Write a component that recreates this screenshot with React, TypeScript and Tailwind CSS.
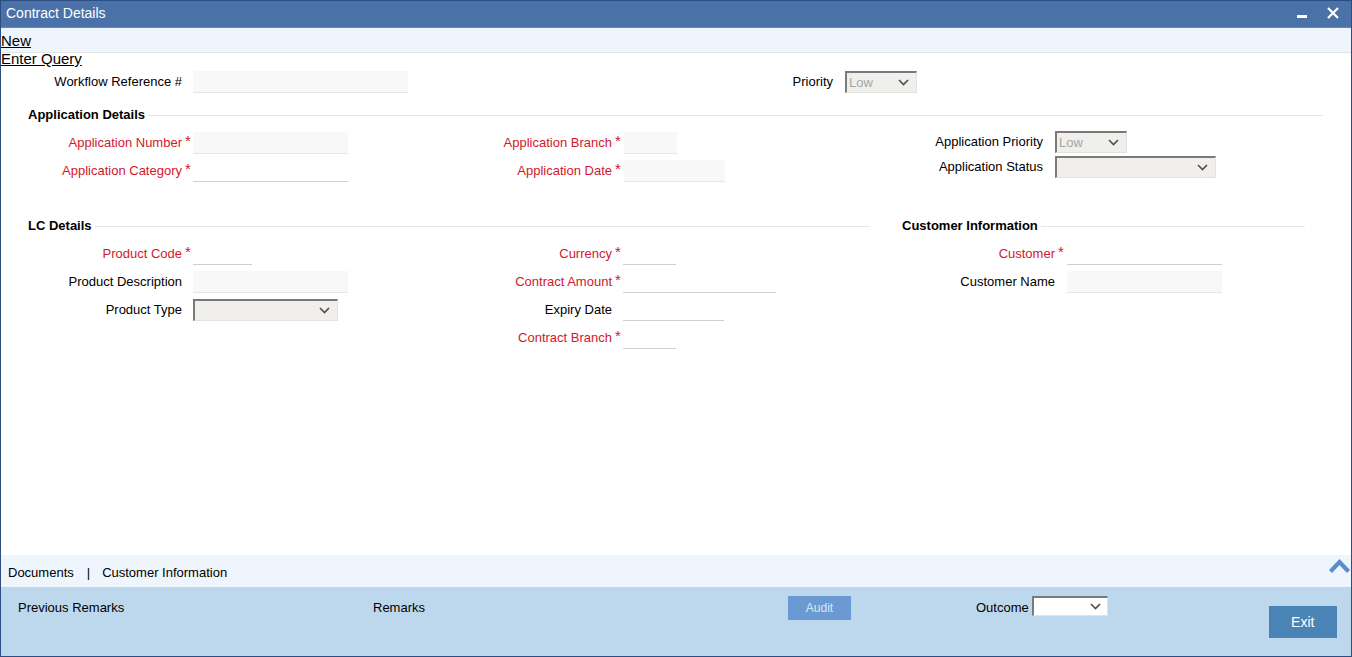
import type { ReactNode } from "react";

const RED = "text-[#d2172b]";

interface FieldProps {
  label: string;
  req?: boolean;
  lw: string;
  slot?: string;
  children: ReactNode;
}

const Field = ({ label, req, lw, slot = "w-[11px]", children }: FieldProps) => (
  <div className="flex items-center h-[22px]">
    <span className={`${lw} shrink-0 text-right whitespace-nowrap leading-[22px] ${req ? RED : "text-black"}`}>
      {label}
    </span>
    <span className={`${slot} shrink-0 pl-[3px] text-[15px] leading-[18px] self-start ${RED}`}>{req ? "*" : ""}</span>
    {children}
  </div>
);

const Input = ({ w, grey }: { w: string; grey?: boolean }) => (
  <div
    className={`${w} h-[22px] shrink-0 ${
      grey ? "bg-[#f8f8f8] border-b border-[#e6e6e6]" : "bg-white border-b border-[#cfcfcf]"
    }`}
  />
);

const Chevron = () => (
  <svg width="11" height="7" viewBox="0 0 11 7" className="shrink-0">
    <path d="M1 1 L5.5 5.5 L10 1" fill="none" stroke="#4d4d4d" strokeWidth="1.6" />
  </svg>
);

const Select = ({ w, value, white }: { w: string; value?: string; white?: boolean }) => (
  <div
    className={`${w} h-[22px] shrink-0 flex items-center justify-between pl-[2px] pr-[7px] border-t-2 border-l-2 border-t-[#7a7a7a] border-l-[#7a7a7a] border-b border-r border-b-[#e2e2e2] border-r-[#e2e2e2] ${
      white ? "bg-white" : "bg-[#f0efeb]"
    }`}
  >
    <span className="text-[13px] text-[#a6a6a6] leading-none">{value}</span>
    <Chevron />
  </div>
);

const Header = ({ title, w, pl }: { title: string; w: string; pl: string }) => (
  <div className={`${w} ${pl} flex items-center h-[16px]`}>
    <span className="font-bold text-[13px] whitespace-nowrap">{title}</span>
    <div className="flex-1 h-px bg-[#e6e6e6] ml-[3px]" />
  </div>
);

export default function App() {
  return (
    <div className="h-[657px] w-full flex flex-col border border-[#2c4e82] bg-white text-[13px] text-black font-['Liberation_Sans',Arial,sans-serif] overflow-hidden">
      {/* title bar */}
      <div className="h-[27px] shrink-0 flex items-center bg-[#4a72a8] border-b border-[#6d87a6] pl-[5px] pr-[12px]">
        <span className="text-white text-[14px] -mt-[2px]">Contract Details</span>
        <div className="ml-auto flex items-center gap-[20px]">
          <div className="w-[10px] h-[3px] bg-white mt-[4px]" />
          <svg width="12" height="12" viewBox="0 0 12 12" className="-mt-[3px]">
            <path d="M1 1 L11 11 M11 1 L1 11" stroke="white" strokeWidth="2.2" />
          </svg>
        </div>
      </div>

      {/* actions */}
      <div className="h-[25px] shrink-0 bg-[#eef5fd] border-b border-[#e2e6ea] pt-[3px]">
        <span className="underline text-[15px] leading-[20px]">New</span>
      </div>
      <div className="-mt-[3px] leading-[17px] text-[15px]">
        <span className="underline">Enter Query</span>
      </div>

      {/* workflow row */}
      <div className="flex mt-[4px]">
        <div className="w-[449px]">
          <Field label="Workflow Reference #" lw="w-[181px]">
            <Input w="w-[215px]" grey />
          </Field>
        </div>
        <Field label="Priority" lw="w-[383px]" slot="w-[12px]">
          <Select w="w-[72px]" value="Low" />
        </Field>
      </div>

      {/* application details */}
      <div className="mt-[14px]">
        <Header title="Application Details" w="w-[1322px]" pl="pl-[27px]" />
      </div>
      <div className="flex mt-[9px]">
        <div className="w-[449px] flex flex-col gap-[6px]">
          <Field label="Application Number" req lw="w-[181px]">
            <Input w="w-[155px]" grey />
          </Field>
          <Field label="Application Category" req lw="w-[181px]">
            <Input w="w-[155px]" />
          </Field>
        </div>
        <div className="w-[430px] flex flex-col gap-[6px]">
          <Field label="Application Branch" req lw="w-[162px]" slot="w-[12px]">
            <Input w="w-[53px]" grey />
          </Field>
          <Field label="Application Date" req lw="w-[162px]" slot="w-[12px]">
            <Input w="w-[101px]" grey />
          </Field>
        </div>
        <div className="flex flex-col gap-[3px] -mt-[1px]">
          <Field label="Application Priority" lw="w-[163px]" slot="w-[12px]">
            <Select w="w-[72px]" value="Low" />
          </Field>
          <Field label="Application Status" lw="w-[163px]" slot="w-[12px]">
            <Select w="w-[161px]" />
          </Field>
        </div>
      </div>

      {/* LC details + customer information */}
      <div className="flex mt-[36px]">
        <div className="w-[879px]">
          <Header title="LC Details" w="w-[869px]" pl="pl-[27px]" />
          <div className="flex mt-[9px]">
            <div className="w-[449px] flex flex-col gap-[6px]">
              <Field label="Product Code" req lw="w-[181px]">
                <Input w="w-[59px]" />
              </Field>
              <Field label="Product Description" lw="w-[181px]">
                <Input w="w-[155px]" grey />
              </Field>
              <Field label="Product Type" lw="w-[181px]">
                <Select w="w-[145px]" />
              </Field>
            </div>
            <div className="w-[430px] flex flex-col gap-[6px]">
              <Field label="Currency" req lw="w-[162px]">
                <Input w="w-[53px]" />
              </Field>
              <Field label="Contract Amount" req lw="w-[162px]">
                <Input w="w-[153px]" />
              </Field>
              <Field label="Expiry Date" lw="w-[162px]">
                <Input w="w-[101px]" />
              </Field>
              <Field label="Contract Branch" req lw="w-[162px]">
                <Input w="w-[53px]" />
              </Field>
            </div>
          </div>
        </div>
        <div className="w-[425px]">
          <Header title="Customer Information" w="w-[425px]" pl="pl-[22px]" />
          <div className="flex flex-col gap-[6px] mt-[9px]">
            <Field label="Customer" req lw="w-[175px]" slot="w-[12px]">
              <Input w="w-[155px]" />
            </Field>
            <Field label="Customer Name" lw="w-[175px]" slot="w-[12px]">
              <Input w="w-[155px]" grey />
            </Field>
          </div>
        </div>
      </div>

      <div className="flex-1" />

      {/* tabs band */}
      <div className="h-[32px] shrink-0 flex items-start bg-[#eef5fd]">
        <div className="pl-[7px] pt-[10px] leading-[16px] whitespace-nowrap">
          <span>Documents</span>
          <span className="ml-[13px]">|</span>
          <span className="ml-[12px]">Customer Information</span>
        </div>
        <svg width="23" height="17" viewBox="0 0 23 17" className="ml-auto mt-[2px] shrink-0">
          <path d="M2.5 14.5 L11.5 5 L20.5 14.5" fill="none" stroke="#5b8dcb" strokeWidth="4.2" />
        </svg>
      </div>

      {/* bottom panel */}
      <div className="h-[69px] shrink-0 flex items-start bg-[#bdd8ec]">
        <div className="w-[372px] pl-[17px] mt-[13px] leading-[16px]">Previous Remarks</div>
        <div className="w-[415px] mt-[13px] leading-[16px]">Remarks</div>
        <div className="w-[63px] h-[24px] mt-[9px] flex items-center justify-center bg-[#6b9ad3] text-[12px] text-[#dbe6f3]">
          Audit
        </div>
        <div className="ml-[125px] mt-[9px] flex items-start gap-[3px]">
          <span className="leading-[16px] mt-[4px]">Outcome</span>
          <div className="h-[20px] w-[76px] flex items-center justify-end pr-[6px] bg-white border-t-2 border-l-2 border-t-[#7a7a7a] border-l-[#7a7a7a] border-b border-r border-b-[#e2e2e2] border-r-[#e2e2e2]">
            <Chevron />
          </div>
        </div>
        <div className="ml-[161px] mt-[19px] w-[68px] h-[32px] flex items-center justify-center bg-[#4a84b4] text-white text-[14px]">
          Exit
        </div>
      </div>
    </div>
  );
}
